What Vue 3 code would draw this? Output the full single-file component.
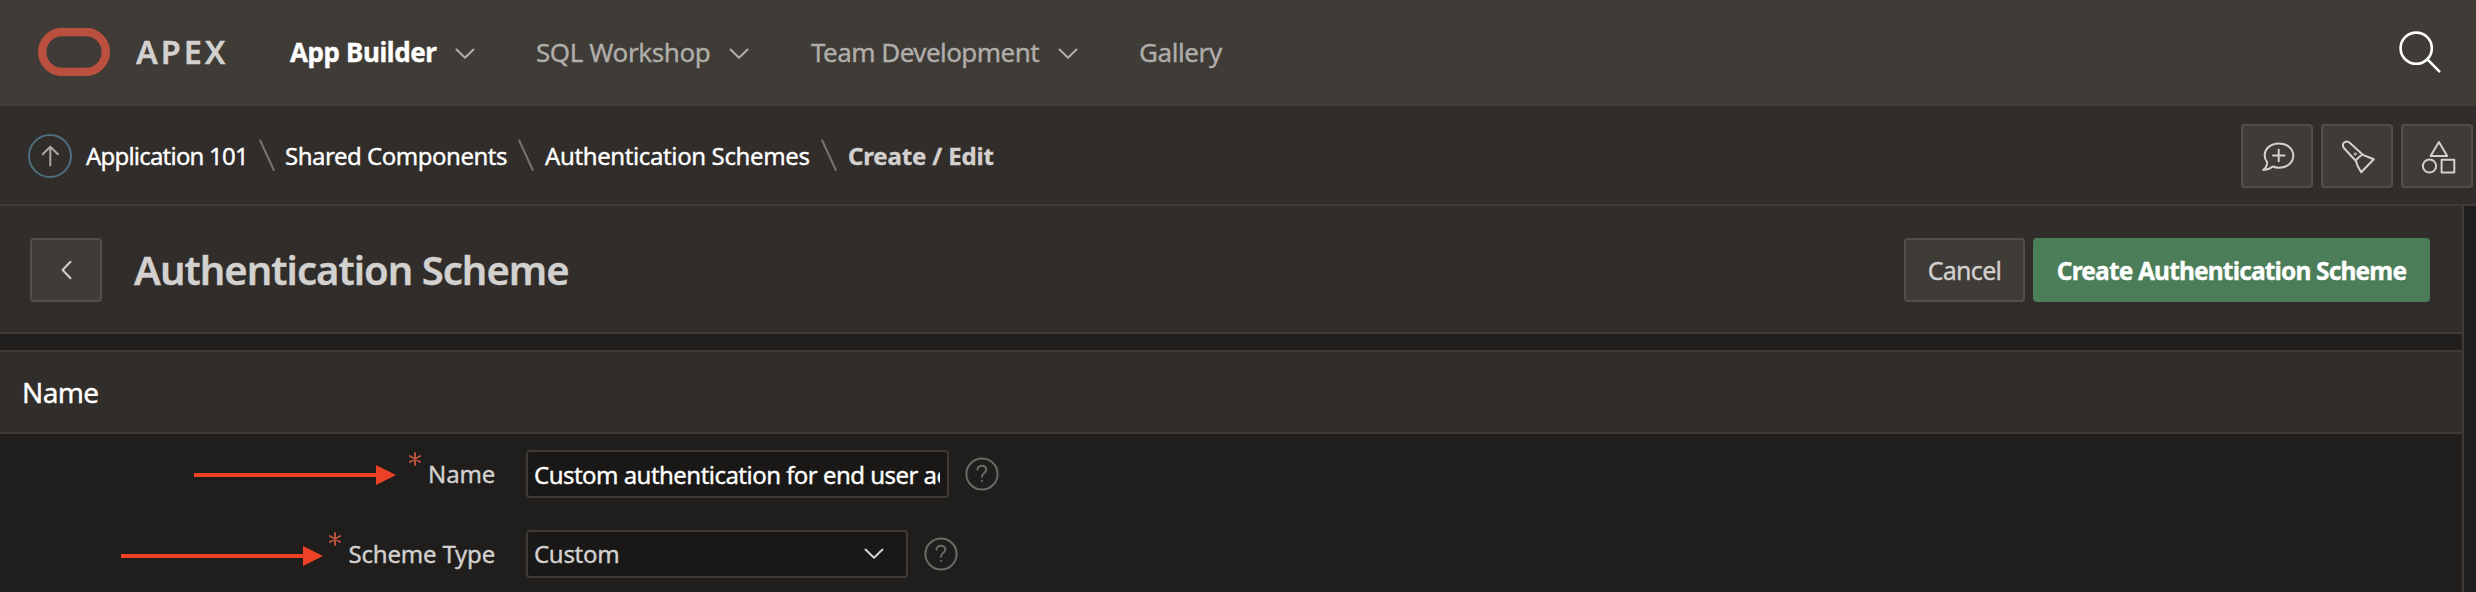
<script setup>
const tabs = [
  { label: 'App Builder', cls: 'builder', menu: true },
  { label: 'SQL Workshop', cls: 'sql', menu: true },
  { label: 'Team Development', cls: 'team', menu: true },
  { label: 'Gallery', cls: 'gallery', menu: false },
]
</script>

<template>
  <div class="page">
    <header class="top">
      <svg class="logo" width="72" height="48" viewBox="0 0 72 48"><rect x="4.2" y="4" width="63.6" height="40" rx="20" /></svg>
      <span class="brand">APEX</span>
      <nav class="tabs">
        <a v-for="t in tabs" :key="t.label" :class="['tab', t.cls]">
          <span>{{ t.label }}</span>
          <svg v-if="t.menu" class="chev" width="20" height="12" viewBox="0 0 20 12"><path d="M1.5 1.5 10 9.8l8.500-8.300" /></svg>
        </a>
      </nav>
      <svg class="search" width="44" height="44" viewBox="0 0 44 44"><circle cx="18.200" cy="18.200" r="15.600" /><path d="M29.700 29.700 41.300 41.300" /></svg>
    </header>

    <div class="crumbbar">
      <svg class="up" width="44" height="44" viewBox="0 0 44 44">
        <circle cx="22" cy="22" r="21" /><path d="M22.300 31.500V13M14.700 20.300l7.600-7.600 7.600 7.600" />
      </svg>
      <div class="crumbs">
        <a class="c1">Application 101</a>
        <svg class="sep" width="16" height="33" viewBox="0 0 16 33"><path d="M1.200 1.500 14.800 31" /></svg>
        <a class="c2">Shared Components</a>
        <svg class="sep" width="16" height="33" viewBox="0 0 16 33"><path d="M1.200 1.500 14.800 31" /></svg>
        <a class="c3">Authentication Schemes</a>
        <svg class="sep" width="16" height="33" viewBox="0 0 16 33"><path d="M1.200 1.500 14.800 31" /></svg>
        <b class="here">Create / Edit</b>
      </div>
      <div class="tools">
        <button class="btn tool">
          <svg width="36" height="36" viewBox="0 0 36 36"><path d="M7.200 23.300C5.500 21.200 4.700 19 4.700 16.500 4.700 9.400 10.800 4.600 19 4.600s14.300 4.900 14.300 12S27.200 28.700 19 28.700c-2.300 0-4.300-.4-6.200-1.200-2.400 2-5.700 3.300-9.500 3.400 2.700-2 3.900-4.700 3.900-7.600z" /><path d="M13 16.500h11.500M18.700 10.800v11.500" /></svg>
        </button>
        <button class="btn tool">
          <svg width="36" height="36" viewBox="0 0 36 36"><path d="M4.300 9.500C1.800 6.900 3 4 4.700 3.200c1.700-1 3.800-.7 5.300.8L22.300 15.200c1.500 1.300 3.300 2 5.200 2.500l6.300 2.500L21.200 33.300l-3.700-6.500c-.6-1.900-.6-3.800-2-5.300zM15.500 21.500l6.800-6.300" /><circle class="dot" cx="15.300" cy="15" r=".5" /></svg>
        </button>
        <button class="btn tool">
          <svg width="36" height="36" viewBox="0 0 36 36"><path d="M18.900 3 27.200 17H10.600zM21.600 20.700h12.700v12.800H21.600z" /><circle cx="9.500" cy="27" r="6.600" /></svg>
        </button>
      </div>
    </div>

    <main class="main">
      <section class="titlebar">
        <button class="btn back"><svg width="14" height="24" viewBox="0 0 14 24"><path d="M11.500 3.700 3.600 12l7.900 8.300" /></svg></button>
        <h1>Authentication Scheme</h1>
        <button class="btn cancel">Cancel</button>
        <button class="btn create">Create Authentication Scheme</button>
      </section>
      <section class="region">
        <h2>Name</h2>
        <div class="row row-name">
          <svg class="arrow" width="202" height="20" viewBox="0 0 202 20"><path d="M0 8h182V0l20 10-20 10v-8H0z" /></svg>
          <svg class="req" width="12" height="14" viewBox="0 0 12 14"><path d="M6 1v12M.8 4l10.400 6M.8 10l10.400-6" /></svg>
          <label>Name</label>
          <div class="field text"><span>Custom authentication for end user access</span></div>
          <svg class="help" width="34" height="34" viewBox="0 0 34 34"><circle cx="17" cy="17" r="15.600" /><path d="M12.500 12.600c0-2.300 1.900-3.900 4.400-3.900s4.400 1.600 4.400 3.900c0 3.300-4.300 3.400-4.300 6.700v.4M17 23.700v.2" /></svg>
        </div>
        <div class="row row-type">
          <svg class="arrow" width="202" height="20" viewBox="0 0 202 20"><path d="M0 8h182V0l20 10-20 10v-8H0z" /></svg>
          <svg class="req" width="12" height="14" viewBox="0 0 12 14"><path d="M6 1v12M.8 4l10.400 6M.8 10l10.400-6" /></svg>
          <label>Scheme Type</label>
          <div class="field select"><span>Custom</span><svg width="20" height="12" viewBox="0 0 20 12"><path d="M1.500 1.500 10 9.800l8.500-8.300" /></svg></div>
          <svg class="help" width="34" height="34" viewBox="0 0 34 34"><circle cx="17" cy="17" r="15.600" /><path d="M12.500 12.600c0-2.300 1.900-3.900 4.400-3.900s4.400 1.600 4.400 3.900c0 3.300-4.300 3.400-4.300 6.700v.4M17 23.700v.2" /></svg>
        </div>
      </section>
    </main>
  </div>
</template>

<style>
html, body { margin: 0; overflow: hidden; background: #201e1c; }
</style>

<style scoped>
.page { width: 2476px; height: 592px; overflow: hidden; background: #201e1c; color: #d3d1cf; font-family: "Noto Sans", "Open Sans", sans-serif; white-space: nowrap; -webkit-text-stroke: .35px currentColor; }
.page *, .page { box-sizing: border-box; }
svg { flex: none; display: block; fill: none; stroke: currentColor; stroke-width: 2; stroke-linecap: round; stroke-linejoin: round; }
.top { height: 106px; background: #3f3b36; display: flex; align-items: center; padding: 0 34px 0 38px; }
.logo { margin-top: -2px; color: #bb503e; stroke-width: 8.400; }
.brand { margin-left: 26px; width: 154px; font-size: 32.500px; font-weight: 600; letter-spacing: 2.900px; margin-top: -3px; }
.tabs { display: flex; flex: 1; margin-top: -2px; }
.tab { display: flex; align-items: center; justify-content: space-between; font-size: 26px; color: #b0aeaa; }
.chev { margin-top: 3px; }
.builder { width: 246px; padding-right: 61px; font-weight: 700; color: #fff; letter-spacing: -.4px; }
.builder .chev { color: #b0aeaa; }
.sql { width: 275px; padding-right: 62px; letter-spacing: -.4px; }
.team { width: 328px; padding-right: 61px; letter-spacing: -.55px; }
.gallery { letter-spacing: -.4px; }
.search { color: #fff; stroke-width: 2.600; margin-top: -2px; }
.crumbbar { height: 100px; background: #312d2a; border-bottom: 2px solid #3e3a37; display: flex; align-items: center; padding: 2px 3px 0 28px; }
.up circle { stroke: #4c707e; }
.up path { stroke: #aaa8a5; }
.crumbs { flex: 1; display: grid; grid-template-columns: 173px 26px 233px 27px 276px 27px auto; justify-content: start; align-items: center; margin: -2px 0 0 14px; font-size: 24px; color: #fff; }
.sep { color: #76726f; }
.c1 { letter-spacing: -.8px; }
.c2 { letter-spacing: -.48px; }
.c3 { letter-spacing: -.38px; }
.here { color: #d3d1cf; letter-spacing: -.15px; }
.tools { display: flex; gap: 8px; }
.btn { height: 64px; border: 2px solid #524e49; border-radius: 4px; background: #3f3b36; color: #d3d1cf; font-family: inherit; padding: 0; display: flex; align-items: center; justify-content: center; -webkit-text-stroke: inherit; }
.tool { width: 72px; }
.tool svg { margin: 1px 0 0 1px; }
.main { width: 2464px; height: 386px; border-right: 2px solid #3e3a37; }
.titlebar { height: 128px; background: #312d2a; border-bottom: 2px solid #3e3a37; display: flex; align-items: center; padding: 2px 32px 0 30px; }
.back { width: 72px; }
h1 { flex: 1; margin: 0 0 0 32px; font-size: 40px; font-weight: 600; letter-spacing: -.97px; line-height: 60px; }
.cancel { width: 121px; font-size: 25px; letter-spacing: -.7px; }
.create { width: 397px; margin-left: 8px; background: #4b7d58; border-color: #4b7d58; color: #fff; font-size: 24.500px; font-weight: 700; letter-spacing: -.85px; }
.region { margin-top: 16px; }
h2 { margin: 0; height: 84px; border: solid #3e3a37; border-width: 2px 0; background: #312d2a; color: #fff; font-size: 28px; font-weight: 400; letter-spacing: -.6px; line-height: 80px; padding-left: 22px; }
.row { height: 80px; display: flex; align-items: center; }
.row-name { width: 999px; padding-left: 194px; }
.row-type { width: 958px; padding-left: 121px; }
.arrow { fill: #ec4126; stroke: none; margin-top: 2px; }
.row-type .arrow { margin-top: 4px; }
.req { color: #bb503e; margin: -31px 0 0 13px; }
.row-type .req { margin-left: 6px; }
label { margin: -2px 0 0 auto; font-size: 24px; letter-spacing: -.2px; }
.field { flex: none; height: 48px; margin-left: 31px; border: 2px solid #3e3a35; border-radius: 4px; background: #191816; display: flex; align-items: center; font-size: 24px; padding: 0 7px 0 6px; }
.field span { overflow: hidden; }
.text { width: 423px; color: #fff; letter-spacing: -.53px; }
.select { width: 382px; justify-content: space-between; padding-right: 22px; letter-spacing: -.3px; }
.select span { margin-top: -2px; }
.help { color: #6b6966; margin-left: 16px; }
</style>
